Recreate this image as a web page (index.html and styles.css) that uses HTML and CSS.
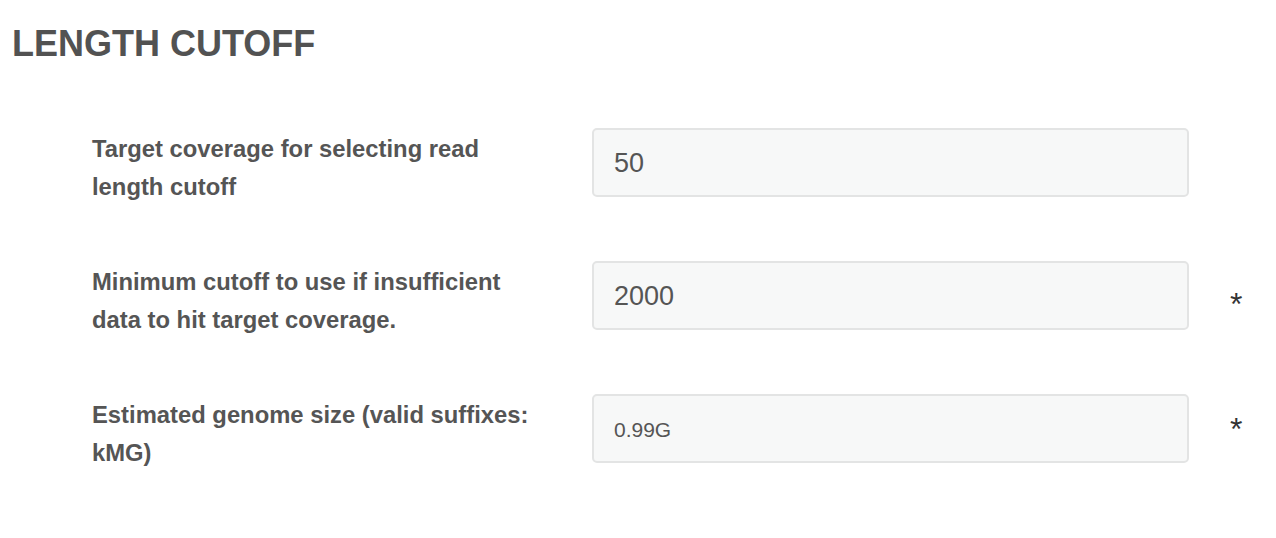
FILE: index.html
```html
<!DOCTYPE html>
<html>
<head>
<meta charset="utf-8">
<title>Length cutoff</title>
<link rel="stylesheet" href="styles.css">
</head>
<body>
<section class="section">
  <h1 class="title">LENGTH CUTOFF</h1>
  <div class="form">
    <div class="row">
      <label class="label" for="f1">Target coverage for selecting read length cutoff</label>
      <input class="field" id="f1" type="text" value="50">
      <span class="req"></span>
    </div>
    <div class="row">
      <label class="label" for="f2">Minimum cutoff to use if insufficient data to hit target coverage.</label>
      <input class="field" id="f2" type="text" value="2000">
      <span class="req">*</span>
    </div>
    <div class="row">
      <label class="label" for="f3">Estimated genome size (valid suffixes: kMG)</label>
      <input class="field field-small" id="f3" type="text" value="0.99G">
      <span class="req req-up">*</span>
    </div>
  </div>
</section>
</body>
</html>
```

FILE: styles.css
```css
html, body {
  margin: 0;
  padding: 0;
  background: #ffffff;
}

body {
  font-family: "Liberation Sans", Arial, Helvetica, sans-serif;
  color: #555555;
}

.section {
  padding: 23px 10px 0 12px;
}

.title {
  margin: 0;
  font-size: 36px;
  line-height: 41px;
  font-weight: bold;
  color: #525252;
}

.form {
  margin-top: 64px;
  padding-left: 80px;
}

.row {
  display: grid;
  grid-template-columns: 500px 597px auto;
  align-items: start;
  margin-bottom: 55px;
}

.label {
  display: block;
  padding-right: 50px;
  padding-top: 2px;
  font-size: 23.8px;
  line-height: 38px;
  font-weight: bold;
  color: #555555;
}

.field {
  box-sizing: border-box;
  width: 597px;
  height: 69px;
  margin: 0;
  padding: 2px 20px 0 20px;
  border: 2px solid #e3e4e4;
  border-radius: 5px;
  background: #f7f8f8;
  font-family: "Liberation Sans", Arial, Helvetica, sans-serif;
  font-size: 27px;
  color: #555555;
  outline: none;
}

.field-small {
  font-size: 21px;
}

.req {
  padding-left: 41px;
  padding-top: 25px;
  font-size: 32px;
  line-height: 37px;
  color: #333333;
}

.req-up {
  padding-top: 17px;
}
```
